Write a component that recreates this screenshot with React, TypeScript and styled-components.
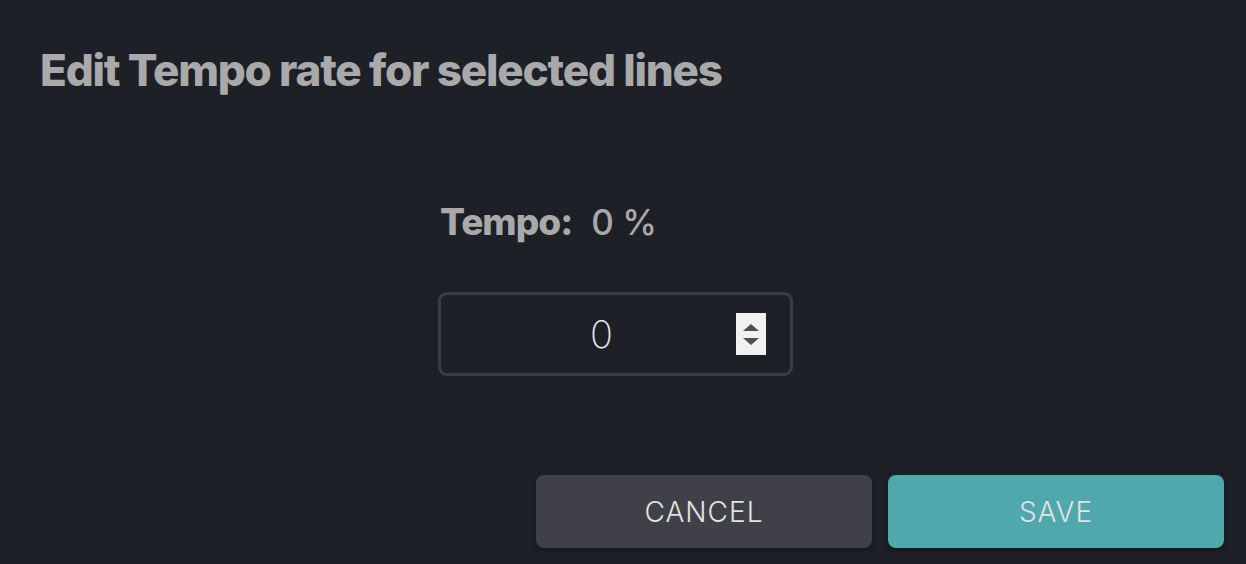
import React, { useState } from "react";
import styled, { createGlobalStyle } from "styled-components";

const GlobalStyle = createGlobalStyle`
  html, body {
    margin: 0;
    padding: 0;
    background: #1e2028;
  }
  body {
    font-family: Inter, "Noto Sans", sans-serif;
  }
`;

const Dialog = styled.div`
  box-sizing: border-box;
  width: 1246px;
  height: 564px;
  padding: 40px 22px 16px 40px;
  display: flex;
  flex-direction: column;
`;

const Title = styled.h2`
  margin: 0;
  font-size: 44px;
  line-height: 60px;
  font-weight: 800;
  letter-spacing: -1.2px;
  color: #a9a9a9;
`;

const Body = styled.div`
  flex: 1;
  display: flex;
  flex-direction: column;
  align-items: center;
  padding-top: 99px;
  padding-right: 33px;
`;

const Field = styled.div`
  display: flex;
  flex-direction: column;
  gap: 47px;
`;

const Readout = styled.div`
  display: flex;
  align-items: baseline;
  gap: 19px;
  padding-left: 2px;
  color: #a9a9a9;
  font-size: 37px;
  line-height: 46px;
  letter-spacing: -1px;
`;

const Label = styled.span`
  font-weight: 800;
`;

const Value = styled.span`
  font-weight: 500;
  font-size: 35px;
  letter-spacing: -0.5px;
`;

const InputBox = styled.div`
  box-sizing: border-box;
  width: 355px;
  height: 84px;
  border: 3px solid #3b3d45;
  border-radius: 9px;
  display: flex;
  align-items: center;
  padding: 0 24px 0 26px;
`;

const NumberInput = styled.input`
  flex: 1;
  min-width: 0;
  background: transparent;
  border: none;
  outline: none;
  color: #e6e6e6;
  font-family: Inter, "Noto Sans", sans-serif;
  font-size: 38px;
  font-weight: 200;
  text-align: center;
  -moz-appearance: textfield;
  &::-webkit-inner-spin-button,
  &::-webkit-outer-spin-button {
    -webkit-appearance: none;
    margin: 0;
  }
`;

const Spinner = styled.div`
  width: 30px;
  height: 42px;
  background: #f1f1f1;
  display: flex;
  flex-direction: column;
  align-items: center;
  justify-content: center;
  gap: 7px;
`;

const Arrow = styled.span<{ $down?: boolean }>`
  width: 0;
  height: 0;
  border-left: 8px solid transparent;
  border-right: 8px solid transparent;
  ${(p) =>
    p.$down
      ? "border-top: 7px solid #505050;"
      : "border-bottom: 7px solid #505050;"}
  cursor: pointer;
`;

const Actions = styled.div`
  display: flex;
  justify-content: flex-end;
  gap: 16px;
`;

const Button = styled.button<{ $primary?: boolean }>`
  width: 336px;
  height: 73px;
  border: none;
  border-radius: 8px;
  background: ${(p) => (p.$primary ? "#4fa8ab" : "#404148")};
  color: #e2e2e2;
  font-family: Inter, "Noto Sans", sans-serif;
  font-size: 28px;
  font-weight: 300;
  letter-spacing: 1px;
  text-transform: uppercase;
  box-shadow: 0 3px 6px rgba(0, 0, 0, 0.35);
  cursor: pointer;
`;

export default function App() {
  const [tempo, setTempo] = useState(0);

  return (
    <>
      <GlobalStyle />
      <Dialog>
        <Title>Edit Tempo rate for selected lines</Title>
        <Body>
          <Field>
            <Readout>
              <Label>Tempo:</Label>
              <Value>{tempo} %</Value>
            </Readout>
            <InputBox>
              <NumberInput
                type="number"
                value={tempo}
                onChange={(e) => setTempo(Number(e.target.value))}
              />
              <Spinner>
                <Arrow onClick={() => setTempo(tempo + 1)} />
                <Arrow $down onClick={() => setTempo(tempo - 1)} />
              </Spinner>
            </InputBox>
          </Field>
        </Body>
        <Actions>
          <Button>Cancel</Button>
          <Button $primary>Save</Button>
        </Actions>
      </Dialog>
    </>
  );
}
